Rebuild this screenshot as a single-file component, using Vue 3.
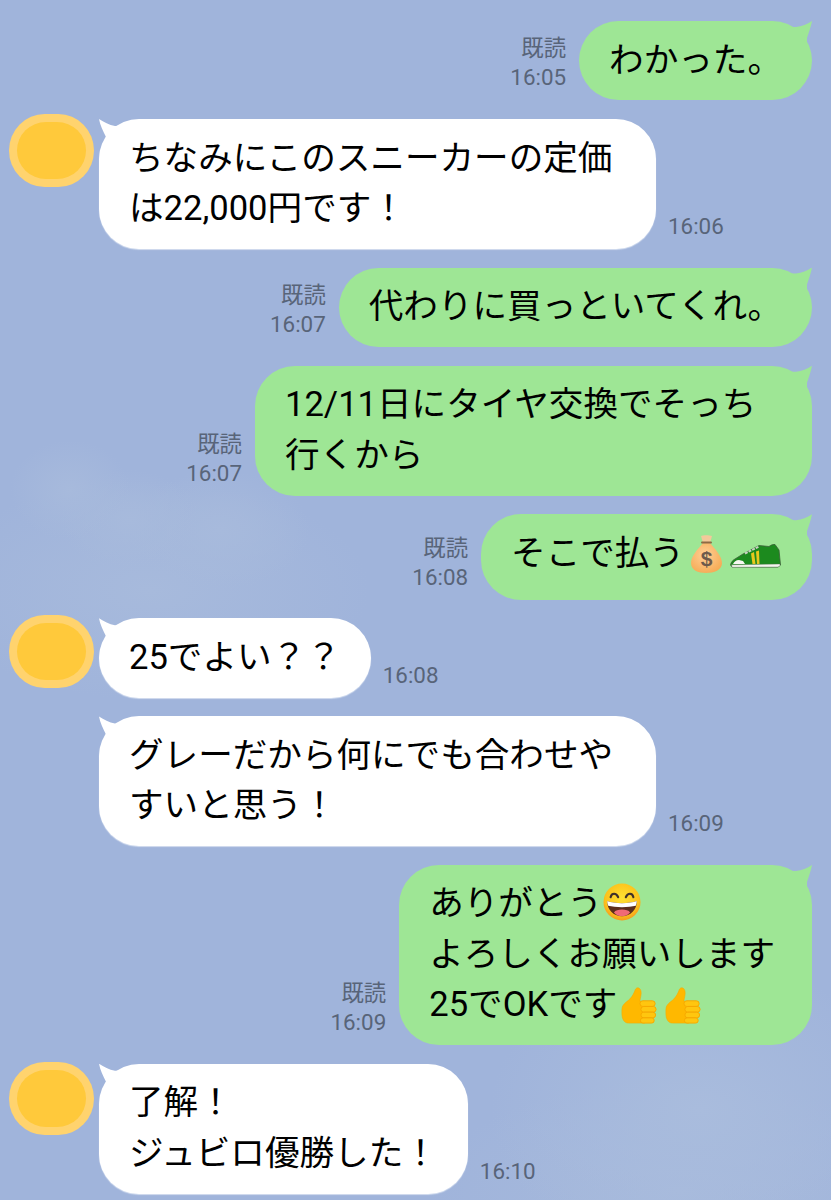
<script setup>
const messages = [
  { side: 'r', time: '16:05', parts: [{ t: 'わかった。' }] },
  { side: 'l', avatar: 'av-top', time: '16:06', parts: [{ t: 'ちなみにこのスニーカーの定価は22,000円です！' }] },
  { side: 'r', time: '16:07', parts: [{ t: '代わりに買っといてくれ。' }] },
  { side: 'r', time: '16:07', parts: [{ t: '12/11日にタイヤ交換でそっち行くから' }] },
  { side: 'r', time: '16:08', cls: 'tall', parts: [{ t: 'そこで払う' }, { e: 'bag' }, { e: 'shoe' }] },
  { side: 'l', avatar: 'av-mid', time: '16:08', parts: [{ t: '25でよい？？' }] },
  { side: 'l', time: '16:09', parts: [{ t: 'グレーだから何にでも合わせやすいと思う！' }] },
  { side: 'r', time: '16:09', cls: 'wide', parts: [{ t: 'ありがとう' }, { e: 'grin' }, { br: true }, { t: 'よろしくお願いします' }, { br: true }, { t: '25でOKです' }, { e: 'thumb' }, { e: 'thumb' }] },
  { side: 'l', avatar: 'av-low', time: '16:10', parts: [{ t: '了解！' }, { br: true }, { t: 'ジュビロ優勝した！' }] },
]
</script>

<template>
  <div class="screen">
    <svg class="defs" width="0" height="0" aria-hidden="true">
      <defs>
        <radialGradient id="bagFill" cx="45%" cy="40%" r="65%">
          <stop offset="0" stop-color="#ffcf96" />
          <stop offset="1" stop-color="#f5ab55" />
        </radialGradient>
        <radialGradient id="faceFill" cx="50%" cy="40%" r="60%">
          <stop offset="0" stop-color="#fee133" />
          <stop offset="0.75" stop-color="#fcc21b" />
          <stop offset="1" stop-color="#f59a1e" />
        </radialGradient>
        <symbol id="bag" viewBox="0 0 40 40">
          <path d="M15 2 C17 1 23 1 26 2 L24 9 L17 9 Z" fill="#f3c99a" />
          <path d="M17 9 C12 15 5 22 5 29 C5 36 12 39 20 39 C28 39 36 36 36 29 C36 22 29 15 24 9 Z" fill="url(#bagFill)" />
          <path d="M16 8.500 L25 8.500" stroke="#8f6a45" stroke-width="2" stroke-linecap="round" />
          <text x="20.500" y="32" text-anchor="middle" font-family="Liberation Sans, sans-serif" font-size="21" font-weight="700" fill="#6d5a4c">$</text>
        </symbol>
        <symbol id="shoe" viewBox="0 0 52 26">
          <path d="M0.500 21 C1 18 3 16 5 15 L13 10 L29 1.500 L39 2.500 C41 1 44 0 45 0.500 L49 6 L50.500 21 L48 23 L2 23 Z" fill="#1c8a1e" stroke="#3d5f3a" stroke-width="0.800" />
          <path d="M15 9.500 L29 2.500" stroke="#c9d2c2" stroke-width="2" stroke-dasharray="3 1" />
          <path d="M3 20 C4 18 6 16 9 16 L13 17 L15 20 Z" fill="#f7f7f2" />
          <path d="M21 9.500 L24 8 L25.500 20 L22.500 20 Z M26 7.500 L29 6.500 L29.500 20 L27 20 Z" fill="#e8c81e" />
          <path d="M1.500 20.800 L50 20 L50 22 L48 23 L2 23.300 Z" fill="#f4f4ee" stroke="#4f6a4c" stroke-width="0.400" />
        </symbol>
        <symbol id="grin" viewBox="0 0 40 40">
          <circle cx="20" cy="20" r="19.500" fill="url(#faceFill)" />
          <path d="M8 15 C9 10 14 10 16 15 M24 15 C26 10 31 10 32 15" fill="none" stroke="#40302a" stroke-width="2.200" stroke-linecap="round" />
          <path d="M4.500 19 C12 22 28 22 35.500 19 C36 28 29 35 20 35 C11 35 4 28 4.500 19 Z" fill="#5c2e1c" />
          <path d="M4.500 19 C12 22 28 22 35.500 19 C35.500 21 35 23 34.500 24 C27 26 13 26 5.500 24 C5 23 4.500 21 4.500 19 Z" fill="#fff" />
          <path d="M11.500 31 C14 27 26 27 28.500 31 C26 34 23 35 20 35 C17 35 14 34 11.500 31 Z" fill="#f06a76" />
        </symbol>
        <symbol id="thumb" viewBox="0 0 40 40">
          <path d="M2 24 C2 18 7 16 10 13 C13 10 15 6 16 3 C17 0 21 0 22 4 C23 8 21 12 21 15 L26 15 L26 38 L9 38 C4 38 2 33 2 28 Z" fill="#ffb800" stroke="#f5ac00" stroke-width="0.600" />
          <rect x="21" y="14.500" width="16" height="6" rx="3" fill="#ffc60f" stroke="#f5a800" />
          <rect x="22" y="20.500" width="16" height="6" rx="3" fill="#ffc60f" stroke="#f5a800" />
          <rect x="22" y="26.500" width="15.500" height="6" rx="3" fill="#ffc60f" stroke="#f5a800" />
          <rect x="21.500" y="32.500" width="14.500" height="5.500" rx="2.700" fill="#ffc60f" stroke="#f5a800" />
        </symbol>
      </defs>
    </svg>

    <div v-for="(m, i) in messages" :key="i" class="row" :class="m.side === 'r' ? 'row-right' : 'row-left'">
      <div v-if="m.side === 'l'" class="avatar-slot">
        <div v-if="m.avatar" class="avatar" :class="m.avatar"><div class="avatar-inner"></div></div>
      </div>
      <div v-if="m.side === 'r'" class="meta">
        <div>既読</div>
        <div>{{ m.time }}</div>
      </div>
      <div class="bubble" :class="[m.side === 'r' ? 'bubble-right' : 'bubble-left', m.cls]">
        <template v-for="(p, j) in m.parts" :key="j">
          <br v-if="p.br" />
          <svg v-else-if="p.e" class="emoji" :class="'emoji-' + p.e"><use :href="'#' + p.e" /></svg>
          <template v-else>{{ p.t }}</template>
        </template>
      </div>
      <div v-if="m.side === 'l'" class="meta meta-left">{{ m.time }}</div>
    </div>
  </div>
</template>

<style scoped>
.screen {
  width: 831px;
  height: 1200px;
  overflow: hidden;
  box-sizing: border-box;
  padding-top: 21px;
  display: flex;
  flex-direction: column;
  gap: 18.7px;
  font-family: Roboto, "Noto Sans CJK JP", sans-serif;
  color: #000;
  background-color: #a0b4db;
  background-image:
    radial-gradient(ellipse 60px 50px at 70px 490px, #a7badc 0%, rgba(167, 186, 220, 0) 100%),
    radial-gradient(ellipse 70px 50px at 130px 520px, #a7badc 0%, rgba(167, 186, 220, 0) 100%),
    radial-gradient(ellipse 90px 60px at 220px 530px, #a7badc 0%, rgba(167, 186, 220, 0) 100%),
    radial-gradient(ellipse 220px 110px at 150px 590px, #a7badc 0%, rgba(167, 186, 220, 0) 100%),
    radial-gradient(ellipse 210px 150px at 700px 1110px, #a9bcdd 0%, rgba(169, 188, 221, 0) 100%),
    radial-gradient(ellipse 250px 110px at 680px 1190px, #a7badc 0%, rgba(167, 186, 220, 0) 100%);
}
.defs {
  position: absolute;
}
.row {
  display: flex;
  align-items: flex-end;
}
.row-right {
  justify-content: flex-end;
  padding-right: 19px;
}
.row-left {
  justify-content: flex-start;
  padding-left: 9px;
}
.avatar-slot {
  width: 90px;
  flex: none;
  align-self: flex-start;
}
.avatar {
  width: 85px;
  height: 73px;
  box-sizing: border-box;
  padding: 8px;
  border-radius: 42% / 50%;
  background: #ffd36e;
}
.av-top {
  margin-top: -5px;
}
.av-mid {
  margin-top: -3px;
}
.av-low {
  margin-top: -2px;
}
.avatar-inner {
  width: 100%;
  height: 100%;
  border-radius: 42% / 50%;
  background: #ffc93b;
}
.bubble {
  position: relative;
  box-sizing: border-box;
  max-width: 557px;
  padding: 13.5px 30px 15.5px;
  border-radius: 40px;
  font-size: 34.6px;
  line-height: 50.4px;
}
.bubble::before {
  content: "";
  position: absolute;
  top: 0;
  width: 34px;
  height: 24px;
}
.bubble-left {
  background: #fff;
  box-shadow: 0 1px 1px rgba(225, 232, 245, 0.8);
}
.bubble-left::before {
  left: 0;
  background: #fff;
  clip-path: path("M0 0 C5 3 10 6 16 7 L22 7 L22 24 L7 24 L7 18 C4 12 1 6 0 0 Z");
}
.bubble-right {
  background: #9ee695;
}
.bubble-right::before {
  right: 0;
  background: #9ee695;
  clip-path: path("M34 0 C29 3 24 5.500 18 6 L12 6 L12 24 L29 24 L29 17 C31 11 33 5 34 0 Z");
}
.tall {
  padding-top: 14px;
  padding-bottom: 21px;
}
.wide {
  padding-right: 37px;
}
.meta {
  flex: none;
  margin-right: 13px;
  margin-bottom: 8px;
  font-size: 22.4px;
  line-height: 29px;
  text-align: right;
  color: #586479;
}
.meta-left {
  margin-right: 0;
  margin-left: 12px;
}
.emoji {
  display: inline-block;
  width: 40px;
  height: 40px;
  vertical-align: -8px;
}
.emoji-bag {
  margin-left: 2px;
  vertical-align: -9px;
}
.emoji-grin {
  height: 38px;
  vertical-align: -6px;
}
.emoji-shoe {
  width: 52px;
  height: 26px;
  margin-left: 4px;
  vertical-align: -5px;
}
.emoji-thumb {
  width: 38px;
  height: 38px;
  margin-left: 3px;
  margin-right: 3px;
  vertical-align: -9px;
}
</style>
